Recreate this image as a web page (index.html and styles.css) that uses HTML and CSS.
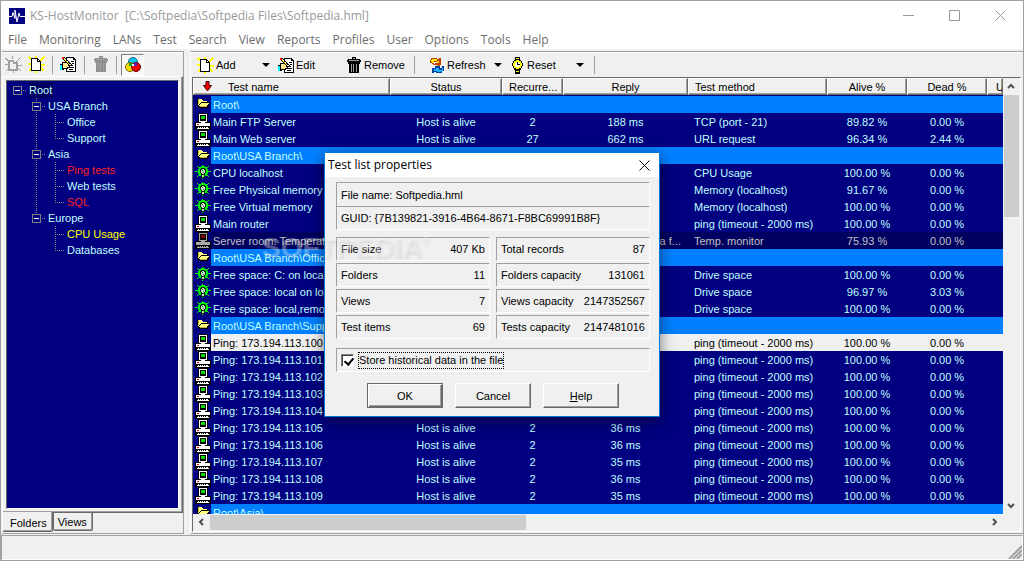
FILE: index.html
```html
<!DOCTYPE html>
<html lang="en">
<head>
    <meta charset="UTF-8">
    <meta name="viewport" content="width=device-width, initial-scale=1.0">
    <title>KS-HostMonitor</title>
    <link rel="stylesheet" href="styles.css">
</head>
<body>
    <!-- icons -->
    <svg class="sprite" width="0" height="0" aria-hidden="true">
        <symbol id="pc" viewBox="0 0 16 17">
            <path fill="#000" d="M3 0h10v10H3zM0 9h16v8H0z"/>
            <path fill="#fff" d="M4 1h8v8H4zM6 9h4v1H6zM1 10h14v3H1zM3 14h10v1H3zM2 15h12v1H2z"/>
            <path fill="#000" d="M5 2h6v6H5zM4 14h1v1H4zM6 14h1v1H6zM8 14h1v1H8zM10 14h1v1h-1z"/>
            <path fill="#0d0" d="M6 3h4v3H6z"/>
            <path fill="#f00" d="M2 11h2v1H2z"/>
        </symbol>
        <symbol id="pc-off" viewBox="0 0 16 17">
            <path fill="#000" d="M3 0h10v10H3zM0 9h16v8H0z"/>
            <path fill="#a8a8a8" d="M4 1h8v8H4zM6 9h4v1H6zM1 10h14v3H1zM3 14h10v1H3zM2 15h12v1H2z"/>
            <path fill="#000" d="M5 2h6v6H5zM4 14h1v1H4zM6 14h1v1H6zM8 14h1v1H8zM10 14h1v1h-1z"/>
            <path fill="#800000" d="M6 3h4v3H6z"/>
        </symbol>
        <symbol id="gear" viewBox="0 0 16 17">
            <path stroke="#00f000" d="M7.500 1v3M7.500 12v3M0 7.500h3M13 7.500h3M2 2l3 3M14 2l-3 3M2 13l3-3M14 13l-3-3"/>
            <path fill="#00f000" d="M6 2h4v1h2v2h1v5h-1v2h-2v1H6v-1H4v-2H3V5h1V3h2z"/>
            <path fill="#003000" d="M6 4h4v1h1v4h-1v5H6V9H5V5h1z"/>
            <path fill="#c8e0c8" d="M7 5h2v1h1v3H9v1H7V9H6V6h1zM7 11h2v2H7z"/>
            <path fill="#406040" d="M7 6h1v1H7zM8 8h1v1H8z"/>
        </symbol>
        <symbol id="folder" viewBox="0 0 16 17">
            <path fill="#000" d="M2 3h5v1h1v1h5v2h2v1h-1v2h-1v2H4v-1H3v-1H2z"/>
            <path fill="#ffff80" d="M3 3h4v1h1v1h4v1H6v1H5v1H4v1H3zM6 7h8v1h-1v1h-1v2H5v-1H4V9h1V8h1z"/>
            <path fill="#c8b040" d="M5 10h7v1H5zM3 3h1v5H3z"/>
        </symbol>
        <symbol id="new" viewBox="0 0 17 17">
            <path stroke="#ff0" stroke-width="2" d="M1 1l4 4M8 0v3M16 1l-4 4M0 8h4M17 9h-4M1 15l3-3M16 15l-3-3M8 17v-3"/>
            <path fill="#000" d="M3 2h7v1h1v1h1v1h1v10H3z"/>
            <path fill="#fff" d="M4 3h5v3h3v8H4zM10 4h1v1h-1z"/>
        </symbol>
        <symbol id="new-off" viewBox="0 0 17 17">
            <path stroke="#a0a0a0" d="M0 2l4 3M7 0v3M16 1l-5 5M0 8h4M17 9h-4M1 15l3-3M16 15l-3-3M8 17v-3"/>
            <path fill="none" stroke="#a0a0a0" stroke-width="2" d="M4 5h4l1 2h3v7H4z"/>
        </symbol>
        <symbol id="edit" viewBox="0 0 18 17">
            <path fill="#000" d="M6 1h8v1h1v1h1v13H6z"/>
            <path fill="#fff" d="M7 2h6v2h2v11H7z"/>
            <path fill="#000" d="M11 5h3v1h-3zM12 7h2v1h-2zM12 9h1v1h-1zM11 11h3v1h-3zM9 13h4v1H9z"/>
            <path fill="#000" d="M2 6h7v1h2v1h1v2h-2v1h1v1H8v1H4v1H0V8h2z"/>
            <path fill="#ffe890" d="M3 7h5v1h3v1H8v1h1v1H7v1H3z"/>
            <path fill="#0ff" d="M0 9h2v5H0z"/>
            <path stroke="#000" d="M2 2l7 7M4 1l7 7"/>
            <path stroke="#ff0" d="M4 3l5 5"/>
            <path fill="#f00" d="M2 1h2v2H2z"/>
        </symbol>
        <symbol id="trash" viewBox="0 0 16 17">
            <path fill="currentColor" d="M6 0h4v2h4v1h1v2H1V3h1V2h4zM2 5h12v2h-1v9H3V7H2z"/>
            <path fill="#a0a0a0" d="M7 1h2v1H7zM3 3h10v1H3zM5 7h1v8H5zM7 7h1v8H7zM10 7h1v8h-1z"/>
        </symbol>
        <symbol id="rgb" viewBox="0 0 16 16">
            <circle cx="8" cy="5" r="4.500" fill="#00c8f0" stroke="#106080"/>
            <circle cx="5" cy="10" r="4.500" fill="#f8e000" stroke="#806000"/>
            <circle cx="11" cy="10" r="4.500" fill="#f00000" stroke="#600000"/>
            <path fill="#20a020" d="M4 6h3v3H4z"/><path fill="#6020c0" d="M9 6h3v3H9z"/><path fill="#fff" d="M7 7h2v2H7z"/>
        </symbol>
        <symbol id="refresh" viewBox="0 0 16 17">
            <path fill="#c04000" d="M2 1h6v1h2V1h2v7H6V6h2V5H5v2H3V6H1V3h1z"/>
            <path fill="#ffe000" d="M3 2h5v2h2v2H8V4H5v2H3V5H2V3h1z"/>
            <path fill="#0040a0" d="M6 9h5v2h2v-2h2v5h-2v2H7v-1H5v1H3v-5h3z"/>
            <path fill="#20b0ff" d="M7 11h3v2h3v-2h1v3h-2v1H8v-1H5v-2h2z"/>
            <path fill="#e06000" d="M8 8h3v1H8zM4 7h2v1H4z"/>
        </symbol>
        <symbol id="watch" viewBox="0 0 14 17">
            <path fill="#000" d="M4 0h5v3h1v1h1v2h1v3h-1v2h-1v2H9v4H4v-4H3v-2H2V9H1V6h1V4h1V3h1z"/>
            <path fill="#ff0" d="M5 1h3v1H5zM5 14h3v1H5zM5 3h3v1h2v2h1v3h-1v2H8v1H5v-1H3V9H2V6h1V4h2z"/>
            <path fill="#fff" d="M5 5h3v1h1v3H8v1H5V9H4V6h1z"/>
            <path fill="#000" d="M6 5h1v2h2v1H6z"/>
        </symbol>
    </svg>

    <div class="window">
        <header class="titlebar">
            <svg class="logo" width="16" height="16" viewBox="0 0 16 16"><path fill="#000080" d="M0 0h16v16H0z"/><path fill="none" stroke="#fff" d="M0 8.500h3l1-4 2 6V2l2 12 2-9 1 3.500h5"/></svg>
            <span class="title">KS-HostMonitor&nbsp; [C:\Softpedia\Softpedia Files\Softpedia.hml]</span>
            <button class="win-btn" aria-label="Minimize"><svg width="11" height="11"><path d="M0 5.500h11"/></svg></button>
            <button class="win-btn" aria-label="Maximize"><svg width="11" height="11"><path d="M.5.5h10v10H.5z"/></svg></button>
            <button class="win-btn" aria-label="Close"><svg width="11" height="11"><path d="M.5.5l10 10M10.500.5l-10 10"/></svg></button>
        </header>

        <nav class="menu">
            <a href="#">File</a>
            <a href="#">Monitoring</a>
            <a href="#">LANs</a>
            <a href="#">Test</a>
            <a href="#">Search</a>
            <a href="#">View</a>
            <a href="#">Reports</a>
            <a href="#">Profiles</a>
            <a href="#">User</a>
            <a href="#">Options</a>
            <a href="#">Tools</a>
            <a href="#">Help</a>
        </nav>

        <main class="main">
            <aside class="side">
                <div class="tools">
                    <button class="tool" aria-label="New folder" disabled><svg width="17" height="17"><use href="#new-off"/></svg></button>
                    <button class="tool" aria-label="New"><svg width="17" height="17"><use href="#new"/></svg></button>
                    <span class="sep"></span>
                    <button class="tool" aria-label="Properties"><svg width="18" height="17"><use href="#edit"/></svg></button>
                    <span class="sep"></span>
                    <button class="tool off" aria-label="Delete" disabled><svg width="16" height="17"><use href="#trash"/></svg></button>
                    <span class="sep"></span>
                    <button class="tool pressed" aria-label="Colors"><svg width="16" height="16"><use href="#rgb"/></svg></button>
                </div>
                <div class="tab-page">
                    <ul class="tree">
                        <li class="root"><div class="node"><i class="box"></i><span class="current">Root</span></div>
                            <ul>
                                <li><div class="node"><i class="box"></i><span>USA Branch</span></div>
                                    <ul>
                                        <li><div class="node"><span>Office</span></div></li>
                                        <li><div class="node"><span>Support</span></div></li>
                                    </ul>
                                </li>
                                <li><div class="node"><i class="box"></i><span>Asia</span></div>
                                    <ul>
                                        <li><div class="node bad"><span>Ping tests</span></div></li>
                                        <li><div class="node"><span>Web tests</span></div></li>
                                        <li><div class="node bad"><span>SQL</span></div></li>
                                    </ul>
                                </li>
                                <li><div class="node"><i class="box"></i><span>Europe</span></div>
                                    <ul>
                                        <li><div class="node warn"><span>CPU Usage</span></div></li>
                                        <li><div class="node"><span>Databases</span></div></li>
                                    </ul>
                                </li>
                            </ul>
                        </li>
                    </ul>
                </div>
                <div class="tabs">
                    <button class="tab active">Folders</button>
                    <button class="tab">Views</button>
                </div>
            </aside>

            <section class="content">
                <div class="tools">
                    <button class="tool wide"><svg width="17" height="17"><use href="#new"/></svg>Add<i class="arrow"></i></button>
                    <button class="tool edit"><svg width="18" height="17"><use href="#edit"/></svg>Edit</button>
                    <button class="tool remove"><svg width="16" height="17"><use href="#trash"/></svg>Remove</button>
                    <span class="sep"></span>
                    <button class="tool wide refresh"><svg width="16" height="17"><use href="#refresh"/></svg>Refresh<i class="arrow"></i></button>
                    <button class="tool wide reset"><svg width="14" height="17"><use href="#watch"/></svg>Reset<i class="arrow"></i></button>
                    <span class="sep"></span>
                </div>
                <div class="list">
                    <div class="list-body">
                        <div class="rows">
                            <table>
                                <colgroup>
                                    <col class="c-icon"><col class="c-name"><col class="c-status"><col class="c-recur"><col class="c-reply"><col class="c-method"><col class="c-pct"><col class="c-pct"><col>
                                </colgroup>
                                <thead>
                                    <tr><th colspan="2" class="name"><svg width="9" height="11" viewBox="0 0 9 11"><path fill="#f00" stroke="#400" d="M3 .5h3v4h2.500L4.500 10 .5 4.500H3z"/></svg>Test name</th><th>Status</th><th>Recurre...</th><th>Reply</th><th class="left">Test method</th><th>Alive %</th><th>Dead %</th><th class="cut">U</th></tr>
                                </thead>
                                <tbody>
                                    <tr class="group"><td><svg><use href="#folder"/></svg></td><td colspan="8">Root\</td></tr>
                                    <tr><td><svg><use href="#pc"/></svg></td><td>Main FTP Server</td><td>Host is alive</td><td>2</td><td>188 ms</td><td>TCP (port - 21)</td><td>89.82 %</td><td>0.00 %</td><td></td></tr>
                                    <tr><td><svg><use href="#pc"/></svg></td><td>Main Web server</td><td>Host is alive</td><td>27</td><td>662 ms</td><td>URL request</td><td>96.34 %</td><td>2.44 %</td><td></td></tr>
                                    <tr class="group"><td><svg><use href="#folder"/></svg></td><td colspan="8">Root\USA Branch\</td></tr>
                                    <tr><td><svg><use href="#gear"/></svg></td><td>CPU localhost</td><td></td><td></td><td></td><td>CPU Usage</td><td>100.00 %</td><td>0.00 %</td><td></td></tr>
                                    <tr><td><svg><use href="#gear"/></svg></td><td>Free Physical memory</td><td></td><td></td><td></td><td>Memory (localhost)</td><td>91.67 %</td><td>0.00 %</td><td></td></tr>
                                    <tr><td><svg><use href="#gear"/></svg></td><td>Free Virtual memory</td><td></td><td></td><td></td><td>Memory (localhost)</td><td>100.00 %</td><td>0.00 %</td><td></td></tr>
                                    <tr><td><svg><use href="#pc"/></svg></td><td>Main router</td><td></td><td></td><td></td><td>ping (timeout - 2000 ms)</td><td>100.00 %</td><td>0.00 %</td><td></td></tr>
                                    <tr class="dim"><td><svg><use href="#pc-off"/></svg></td><td>Server room: Temperature</td><td></td><td></td><td class="right">a f...</td><td>Temp. monitor</td><td>75.93 %</td><td>0.00 %</td><td></td></tr>
                                    <tr class="group"><td><svg><use href="#folder"/></svg></td><td colspan="8">Root\USA Branch\Office\</td></tr>
                                    <tr><td><svg><use href="#gear"/></svg></td><td>Free space: C: on localhost</td><td></td><td></td><td></td><td>Drive space</td><td>100.00 %</td><td>0.00 %</td><td></td></tr>
                                    <tr><td><svg><use href="#gear"/></svg></td><td>Free space: local on localhost</td><td></td><td></td><td></td><td>Drive space</td><td>96.97 %</td><td>3.03 %</td><td></td></tr>
                                    <tr><td><svg><use href="#gear"/></svg></td><td>Free space: local,removable</td><td></td><td></td><td></td><td>Drive space</td><td>100.00 %</td><td>0.00 %</td><td></td></tr>
                                    <tr class="group"><td><svg><use href="#folder"/></svg></td><td colspan="8">Root\USA Branch\Support\</td></tr>
                                    <tr class="selected"><td><svg><use href="#pc"/></svg></td><td>Ping: 173.194.113.100</td><td></td><td></td><td></td><td>ping (timeout - 2000 ms)</td><td>100.00 %</td><td>0.00 %</td><td></td></tr>
                                    <tr><td><svg><use href="#pc"/></svg></td><td>Ping: 173.194.113.101</td><td></td><td></td><td></td><td>ping (timeout - 2000 ms)</td><td>100.00 %</td><td>0.00 %</td><td></td></tr>
                                    <tr><td><svg><use href="#pc"/></svg></td><td>Ping: 173.194.113.102</td><td></td><td></td><td></td><td>ping (timeout - 2000 ms)</td><td>100.00 %</td><td>0.00 %</td><td></td></tr>
                                    <tr><td><svg><use href="#pc"/></svg></td><td>Ping: 173.194.113.103</td><td></td><td></td><td></td><td>ping (timeout - 2000 ms)</td><td>100.00 %</td><td>0.00 %</td><td></td></tr>
                                    <tr><td><svg><use href="#pc"/></svg></td><td>Ping: 173.194.113.104</td><td></td><td></td><td></td><td>ping (timeout - 2000 ms)</td><td>100.00 %</td><td>0.00 %</td><td></td></tr>
                                    <tr><td><svg><use href="#pc"/></svg></td><td>Ping: 173.194.113.105</td><td>Host is alive</td><td>2</td><td>36 ms</td><td>ping (timeout - 2000 ms)</td><td>100.00 %</td><td>0.00 %</td><td></td></tr>
                                    <tr><td><svg><use href="#pc"/></svg></td><td>Ping: 173.194.113.106</td><td>Host is alive</td><td>2</td><td>36 ms</td><td>ping (timeout - 2000 ms)</td><td>100.00 %</td><td>0.00 %</td><td></td></tr>
                                    <tr><td><svg><use href="#pc"/></svg></td><td>Ping: 173.194.113.107</td><td>Host is alive</td><td>2</td><td>35 ms</td><td>ping (timeout - 2000 ms)</td><td>100.00 %</td><td>0.00 %</td><td></td></tr>
                                    <tr><td><svg><use href="#pc"/></svg></td><td>Ping: 173.194.113.108</td><td>Host is alive</td><td>2</td><td>36 ms</td><td>ping (timeout - 2000 ms)</td><td>100.00 %</td><td>0.00 %</td><td></td></tr>
                                    <tr><td><svg><use href="#pc"/></svg></td><td>Ping: 173.194.113.109</td><td>Host is alive</td><td>2</td><td>35 ms</td><td>ping (timeout - 2000 ms)</td><td>100.00 %</td><td>0.00 %</td><td></td></tr>
                                    <tr class="group"><td><svg><use href="#folder"/></svg></td><td colspan="8">Root\Asia\</td></tr>
                                </tbody>
                            </table>
                        </div>
                        <div class="vscroll">
                            <button class="scroll-btn" aria-label="Up"><svg width="9" height="9"><path d="M1 6l3-3 3 3"/></svg></button>
                            <div class="vthumb"></div>
                            <button class="scroll-btn" aria-label="Down"><svg width="9" height="9"><path d="M1 3l3 3 3-3"/></svg></button>
                        </div>
                    </div>
                    <div class="hscroll">
                        <button class="scroll-btn" aria-label="Left"><svg width="9" height="9"><path d="M6 1L3 4l3 3"/></svg></button>
                        <div class="hthumb"></div>
                        <button class="scroll-btn" aria-label="Right"><svg width="9" height="9"><path d="M3 1l3 3-3 3"/></svg></button>
                    </div>
                </div>
            </section>
        </main>

        <footer class="status">
            <svg width="14" height="14" viewBox="0 0 14 14"><path stroke="#a0a0a0" stroke-width="2" d="M1 14L14 1M5 14l9-9M9 14l5-5"/></svg>
        </footer>
    </div>

    <!-- test list properties -->
    <form class="dialog">
        <div class="dialog-title">
            <span>Test list properties</span>
            <button type="button" aria-label="Close"><svg width="11" height="11"><path d="M.5.5l10 10M10.500.5l-10 10"/></svg></button>
        </div>
        <div class="dialog-body">
            <div class="field file">File name: Softpedia.hml</div>
            <div class="field guid">GUID: {7B139821-3916-4B64-8671-F8BC69991B8F}</div>
            <div class="stats">
                <div class="field"><span>File size</span><span>407 Kb</span></div>
                <div class="field"><span>Total records</span><span>87</span></div>
                <div class="field"><span>Folders</span><span>11</span></div>
                <div class="field"><span>Folders capacity</span><span>131061</span></div>
                <div class="field"><span>Views</span><span>7</span></div>
                <div class="field"><span>Views capacity</span><span>2147352567</span></div>
                <div class="field"><span>Test items</span><span>69</span></div>
                <div class="field"><span>Tests capacity</span><span>2147481016</span></div>
            </div>
            <div class="field check">
                <input type="checkbox" id="history" checked>
                <label for="history">Store historical data in the file</label>
            </div>
            <div class="actions">
                <button type="button" class="btn default">OK</button>
                <button type="button" class="btn">Cancel</button>
                <button type="button" class="btn"><u>H</u>elp</button>
            </div>
        </div>
    </form>

    <div class="watermark">SOFTPEDIA<sup>®</sup></div>
</body>
</html>
```

FILE: styles.css
```css
* {
    box-sizing: border-box;
}
body {
    margin: 0;
    font: 11px/16px "Liberation Sans", Arial, sans-serif;
    color: #000;
}
button {
    font: inherit;
    color: inherit;
    padding: 0;
    border: 0;
    background: none;
}
ul {
    list-style: none;
    margin: 0;
    padding: 0;
}
svg {
    display: block;
    flex: none;
    fill: none;
}
.tool svg, td svg {
    shape-rendering: crispEdges;
}
.tool.pressed svg {
    shape-rendering: auto;
}
.sprite {
    position: absolute;
}
.window {
    height: 100vh;
    display: flex;
    flex-direction: column;
    background: #f0f0f0;
    border: 1px solid #a0a0a0;
    overflow: hidden;
}

/* title and menu */
.titlebar {
    display: flex;
    align-items: center;
    height: 29px;
    padding-left: 8px;
    background: #fff;
    font: 12px/16px "Open Sans", sans-serif;
    color: #999;
}
.title {
    flex: 1;
    padding-left: 5px;
    white-space: nowrap;
}
.win-btn {
    width: 46px;
    height: 28px;
    display: flex;
    align-items: center;
    justify-content: center;
}
.win-btn svg {
    stroke: #999;
}
.menu {
    display: flex;
    gap: 12px;
    height: 19px;
    padding: 2px 7px 0;
    background: #fff;
    font: 12px/16px "Open Sans", sans-serif;
}
.menu a {
    color: #6d6d6d;
    text-decoration: none;
}

.main {
    flex: 1;
    min-height: 0;
    display: flex;
    gap: 6px;
    padding: 2px 0 1px 1px;
}
.side, .content {
    display: flex;
    flex-direction: column;
    border-top: 1px solid #a0a0a0;
    border-bottom: 1px solid #a0a0a0;
    box-shadow: inset 0 1px #fff;
}
.side {
    width: 182px;
    border-right: 1px solid #a0a0a0;
}
.content {
    flex: 1;
    min-width: 0;
    border-left: 1px solid #fff;
    padding: 0 2px 0 1px;
}

/* toolbars */
.tools {
    display: flex;
    align-items: center;
    height: 24px;
    padding-top: 1px;
}
.tool {
    display: flex;
    align-items: center;
    justify-content: center;
    width: 23px;
    height: 22px;
    color: #000;
}
.tool.off {
    color: #909090;
}
.tool.pressed {
    border: 1px solid;
    border-color: #808080 #fff #fff #808080;
    background: repeating-conic-gradient(#fff 0 25%, #f0f0f0 0 50%) 0 0 / 2px 2px;
}
.sep {
    width: 1px;
    height: 18px;
    margin: 0 4px;
    background: #a0a0a0;
}
.content .tools {
    height: 25px;
}
.content .tool {
    justify-content: flex-start;
    width: auto;
    gap: 2px;
}
.content .tool.wide {
    width: 84px;
    padding-left: 5px;
}
.content .tool.edit {
    width: 69px;
    padding-left: 2px;
    gap: 0;
}
.content .tool.remove {
    width: 65px;
    padding-left: 1px;
}
.content .tool.refresh {
    margin-left: 5px;
}
.content .tool.reset {
    margin-left: -2px;
}
.arrow {
    margin-left: auto;
    margin-right: 6px;
    border: 4px solid transparent;
    border-top-color: #000;
    border-bottom: 0;
}

/* folder tree */
.tab-page {
    flex: 1;
    min-height: 0;
    padding: 3px;
    border: 1px solid;
    border-color: #fff #696969 #696969 #fff;
    box-shadow: inset -1px -1px #a0a0a0;
    display: flex;
}
.tree {
    flex: 1;
    padding: 1px 0 0 6px;
    border: 1px solid;
    border-color: #696969 #fff #fff #696969;
    background: #000080;
    color: #c0ffff;
}
.tree ul {
    padding-left: 19px;
}
.tree li {
    background: repeating-linear-gradient(#808080 0 1px, transparent 1px 2px) 4px 0 / 1px 100% no-repeat;
}
.tree li:last-child {
    background-size: 1px 8px;
}
.tree li.root {
    background: none;
}
.node {
    display: flex;
    align-items: center;
    height: 16px;
    background: repeating-linear-gradient(90deg, #808080 0 1px, transparent 1px 2px) 4px 8px / 9px 1px no-repeat;
}
.node span {
    margin-left: 16px;
}
.node .box + span {
    margin-left: 6px;
    padding-left: 1px;
}
.node .current {
    background: #000060;
    padding-right: 1px;
}
.box {
    width: 9px;
    height: 9px;
    border: 1px solid #808080;
    background: linear-gradient(#fff, #fff) 1px 3px / 5px 1px no-repeat #000080;
}
.bad {
    color: #ff2020;
}
.warn {
    color: #ff0;
}
.tabs {
    display: flex;
    align-items: flex-start;
    height: 20px;
}
.tab {
    height: 18px;
    padding: 0 5px 0 4px;
    border: 1px solid #696969;
    border-top: 0;
    border-radius: 0 0 2px 2px;
    box-shadow: inset -1px -1px #a0a0a0;
}
.tab.active {
    height: 20px;
    padding: 3px 5px 0 7px;
    margin-top: -1px;
    border-left-color: #fff;
    background: #f0f0f0;
}

/* test list */
.list {
    flex: 1;
    min-height: 0;
    display: flex;
    flex-direction: column;
    border: 1px solid;
    border-color: #696969 #fff #fff #696969;
    margin-bottom: 1px;
}
.list-body {
    flex: 1;
    min-height: 0;
    display: flex;
}
.rows {
    flex: 1;
    min-width: 0;
    overflow: hidden;
    background: #000080;
    color: #c0ffff;
}
table {
    width: 100%;
    table-layout: fixed;
    border-collapse: separate;
    border-spacing: 0;
}
.c-icon { width: 18px; }
.c-name { width: 179px; }
.c-status { width: 112px; }
.c-recur { width: 61px; }
.c-reply { width: 125px; }
.c-method { width: 139px; }
.c-pct { width: 80px; }
th {
    height: 17px;
    padding: 0 6px;
    font-weight: normal;
    line-height: 14px;
    color: #000;
    background: #f0f0f0;
    border: 1px solid;
    border-color: #fff #696969 #696969 #fff;
    box-shadow: inset -1px -1px #a0a0a0;
    white-space: nowrap;
    overflow: hidden;
}
th.name {
    text-align: left;
}
th.name svg {
    display: inline-block;
    margin: 0 16px 0 3px;
    vertical-align: -1px;
}
th.left, th.cut {
    text-align: left;
}
th.cut {
    padding: 0 0 0 8px;
}
tbody tr:first-child td {
    height: 18px;
    border-top: 1px solid #000080;
}
td {
    height: 17px;
    padding: 0 2px;
    text-align: center;
    white-space: nowrap;
    overflow: hidden;
}
td:first-child {
    padding: 0 0 0 2px;
    background: #000080;
}
td svg {
    width: 16px;
    height: 17px;
}
td:nth-child(2), td:nth-child(6) {
    text-align: left;
}
td:nth-child(6) {
    padding-left: 6px;
}
td.right {
    text-align: right;
    padding-right: 7px;
}
.group {
    background: #0080ff;
}
.dim {
    background: #000060;
    color: #c0c0c0;
}
.selected {
    background: #f0f0f0;
    color: #000;
}

/* scroll bars */
.vscroll {
    display: flex;
    flex-direction: column;
    width: 17px;
}
.hscroll {
    display: flex;
    height: 17px;
    padding-right: 17px;
}
.scroll-btn {
    width: 17px;
    height: 17px;
    flex: none;
    display: flex;
    align-items: center;
    justify-content: center;
}
.scroll-btn svg {
    stroke: #505050;
    stroke-width: 2;
}
.vthumb {
    width: 15px;
    height: 28%;
    margin: 0 1px auto;
    background: #cdcdcd;
}
.hthumb {
    width: 39%;
    height: 15px;
    margin: 1px auto 0 0;
    background: #cdcdcd;
}

.status {
    display: flex;
    justify-content: flex-end;
    align-items: flex-end;
    height: 25px;
    border: 1px solid;
    border-color: #a0a0a0 #fff #fff #a0a0a0;
}

/* dialog */
.dialog {
    position: absolute;
    left: 324px;
    top: 152px;
    width: 336px;
    border: 1px solid #0078d7;
    background: #f0f0f0;
    box-shadow: 0 4px 14px rgba(0, 0, 0, 0.5);
}
.dialog-title {
    display: flex;
    align-items: center;
    justify-content: space-between;
    height: 24px;
    padding: 0 9px 0 3px;
    background: #fff;
    font: 12px/16px "Open Sans", sans-serif;
}
.dialog-title svg {
    stroke: #000;
}
.dialog-body {
    padding: 5px 9px 7px 11px;
}
.field {
    display: flex;
    justify-content: space-between;
    align-items: center;
    height: 24px;
    padding: 0 4px;
    border: 1px solid;
    border-color: #a0a0a0 #fff #fff #a0a0a0;
}
.file {
    border-bottom: 0;
}
.stats {
    display: grid;
    grid-template-columns: 1fr 1fr;
    gap: 2px 6px;
    margin: 7px 0 9px;
}
.check {
    justify-content: flex-start;
    gap: 5px;
}
.check input {
    appearance: none;
    width: 13px;
    height: 13px;
    margin: 0;
    border: 1px solid;
    border-color: #808080 #fff #fff #808080;
    background: #fff;
    box-shadow: inset 1px 1px #404040;
}
.check input:checked::before {
    content: "";
    display: block;
    width: 4px;
    height: 7px;
    margin: 1px 0 0 4px;
    border: solid #000;
    border-width: 0 2px 2px 0;
    transform: rotate(40deg);
}
.check label {
    outline: 1px dotted #000;
    line-height: 15px;
}
.actions {
    display: flex;
    gap: 12px;
    padding: 11px 0 1px 31px;
}
.btn {
    width: 76px;
    height: 25px;
    border: 1px solid;
    border-color: #fff #696969 #696969 #fff;
    box-shadow: inset -1px -1px #a0a0a0;
}
.btn.default {
    border-color: #696969;
    box-shadow: inset 1px 1px #fff, inset -1px -1px #696969, inset -2px -2px #a0a0a0;
}

.watermark {
    position: absolute;
    left: 262px;
    top: 232px;
    font: bold 28px/32px "Liberation Sans", Arial, sans-serif;
    color: rgba(255, 255, 255, 0.3);
    text-shadow: 1px 2px 3px rgba(128, 128, 128, 0.2);
    pointer-events: none;
}
.watermark sup {
    font-size: 9px;
    line-height: 1px;
    vertical-align: 14px;
}
```
